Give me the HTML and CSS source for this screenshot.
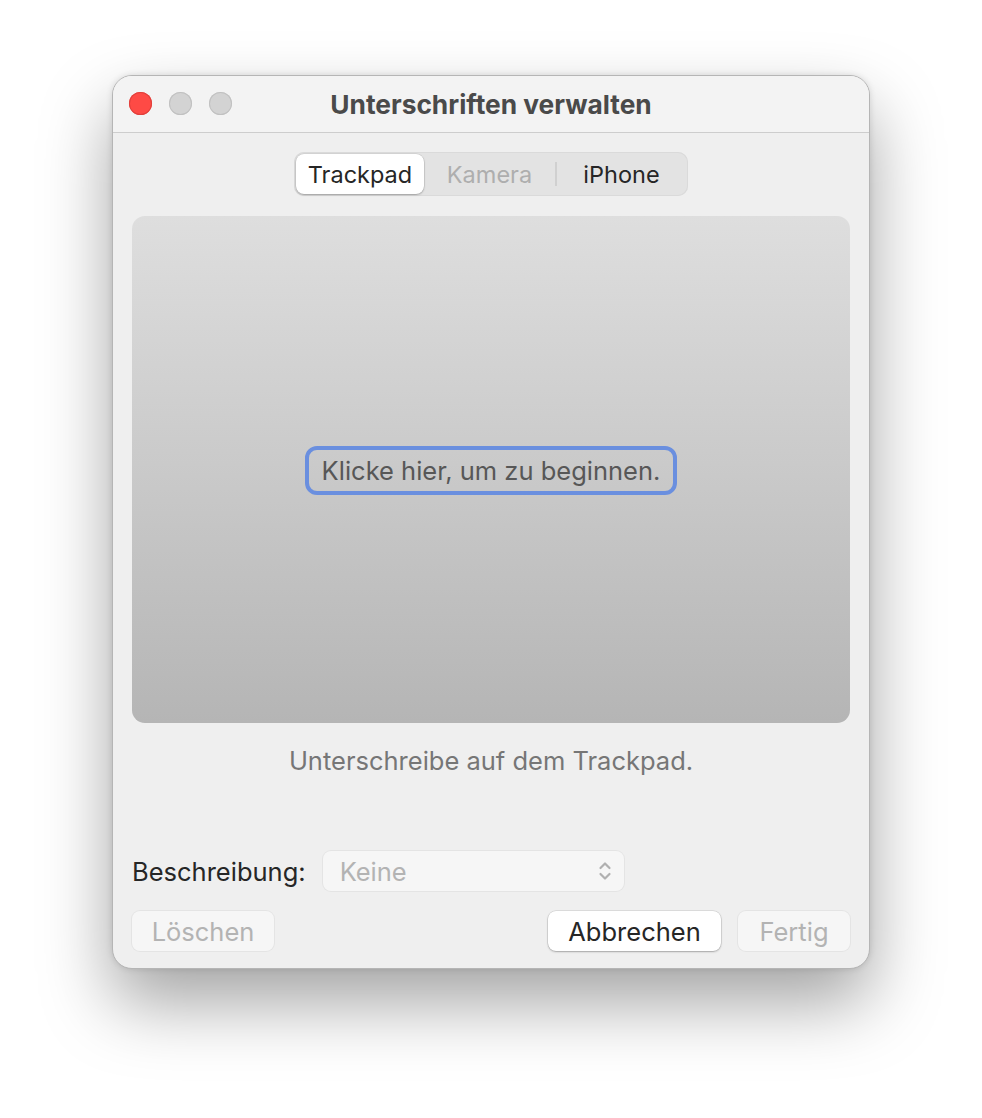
FILE: index.html
```html
<!DOCTYPE html>
<html lang="de">
<head>
<meta charset="utf-8">
<title>Unterschriften verwalten</title>
<link rel="stylesheet" href="styles.css">
</head>
<body>
<div class="stage">
  <div class="window">
    <header class="titlebar">
      <div class="lights">
        <span class="light close"></span>
        <span class="light"></span>
        <span class="light"></span>
      </div>
      <h1 class="title">Unterschriften verwalten</h1>
    </header>
    <main class="content">
      <div class="segmented">
        <span class="seg selected">Trackpad</span>
        <span class="seg disabled">Kamera</span>
        <span class="seg-divider"></span>
        <span class="seg last">iPhone</span>
      </div>
      <div class="pad">
        <div class="start">Klicke hier, um zu beginnen.</div>
      </div>
      <p class="hint">Unterschreibe auf dem Trackpad.</p>
      <div class="form-row">
        <span class="label">Beschreibung:</span>
        <div class="popup">
          <span>Keine</span>
          <svg class="chevrons" width="14" height="24" viewBox="0 0 14 24">
            <path d="M2.5 9 L7 4.5 L11.5 9 M2.5 15 L7 19.5 L11.5 15" fill="none" stroke="#b0b0b0" stroke-width="2.2" stroke-linecap="round" stroke-linejoin="round"/>
          </svg>
        </div>
      </div>
      <div class="buttons">
        <button class="btn disabled delete">Löschen</button>
        <span class="spacer"></span>
        <button class="btn primary">Abbrechen</button>
        <button class="btn disabled done">Fertig</button>
      </div>
    </main>
  </div>
</div>
</body>
</html>
```
FILE: styles.css
```css
html, body {
  margin: 0;
  padding: 0;
  background: #ffffff;
}

body {
  font-family: "Inter", "Liberation Sans", sans-serif;
  color: #262626;
  min-height: 1118px;
}

.stage {
  padding: 75px 0 0 112px;
  height: 1118px;
  box-sizing: border-box;
}

.window {
  width: 758px;
  height: 894px;
  box-sizing: border-box;
  border-radius: 20px;
  background: #efefef;
  border: 1px solid #b5b5b5;
  box-shadow: 0 34px 70px rgba(0, 0, 0, 0.36), 0 0 6px rgba(0, 0, 0, 0.12);
  overflow: hidden;
  display: flex;
  flex-direction: column;
}

.titlebar {
  height: 56px;
  flex: none;
  background: #f3f3f3;
  border-bottom: 1px solid #cdcdcd;
  position: relative;
  display: flex;
  align-items: center;
  justify-content: center;
}

.lights {
  position: absolute;
  left: 16px;
  top: 16px;
  display: flex;
  gap: 17px;
}

.light {
  width: 23px;
  height: 23px;
  border-radius: 50%;
  background: #d3d3d3;
  box-shadow: inset 0 0 0 1px #c1c1c1;
}

.light.close {
  background: #fe4a45;
  box-shadow: inset 0 0 0 1px #e0403c;
}

.title {
  margin: 0;
  font-size: 26.3px;
  font-weight: 700;
  color: #4a4a4a;
}

.content {
  flex: 1;
  display: flex;
  flex-direction: column;
  padding: 19px 19px 0 19px;
}

.segmented {
  align-self: center;
  display: flex;
  align-items: center;
  height: 44px;
  box-sizing: border-box;
  padding: 2px;
  border-radius: 10px;
  background: #e3e3e3;
  box-shadow: inset 0 0 0 1px #dadada;
  font-size: 23.5px;
}

.seg {
  height: 40px;
  display: flex;
  align-items: center;
  justify-content: center;
  color: #262626;
}

.seg.selected {
  width: 128px;
  background: #ffffff;
  border-radius: 8px;
  box-shadow: 0 1px 2px rgba(0, 0, 0, 0.25), 0 0 0 0.5px rgba(0, 0, 0, 0.12);
}

.seg.disabled {
  width: 131px;
  color: #aeaeae;
}

.seg-divider {
  width: 2px;
  height: 24px;
  background: #d0d0d0;
}

.seg.last {
  width: 129px;
}

.pad {
  margin-top: 20px;
  height: 507px;
  border-radius: 13px;
  background: linear-gradient(#dedede, #b5b5b5);
  display: flex;
  align-items: center;
  justify-content: center;
}

.start {
  margin-top: 2px;
  height: 49px;
  box-sizing: border-box;
  padding: 0 13px;
  border: 4px solid #6a8fdf;
  border-radius: 12px;
  font-size: 25.5px;
  color: #575757;
  display: flex;
  align-items: center;
}

.hint {
  margin: 22px 0 0;
  height: 32px;
  line-height: 32px;
  text-align: center;
  font-size: 25.5px;
  color: #767676;
}

.form-row {
  margin-top: 74px;
  display: flex;
  align-items: center;
  gap: 17px;
}

.label {
  font-size: 25.5px;
  color: #262626;
}

.popup {
  width: 301px;
  height: 40px;
  box-sizing: border-box;
  border-radius: 8px;
  background: #f6f6f6;
  box-shadow: 0 0 0 1px #e4e4e4;
  display: flex;
  align-items: center;
  justify-content: space-between;
  padding: 0 12px 0 17px;
  font-size: 25.5px;
  color: #b3b3b3;
}

.buttons {
  margin-top: 20px;
  display: flex;
  align-items: center;
  gap: 17px;
}

.spacer {
  flex: 1;
}

.btn {
  height: 40px;
  border: none;
  border-radius: 8px;
  font-family: inherit;
  font-size: 25.5px;
  padding: 0;
}

.btn.delete {
  width: 142px;
}

.btn.done {
  width: 112px;
}

.btn.disabled {
  background: #f6f6f6;
  color: #b3b3b3;
  box-shadow: 0 0 0 1px #e4e4e4;
}

.btn.primary {
  width: 173px;
  background: #ffffff;
  color: #262626;
  box-shadow: 0 1px 2px rgba(0, 0, 0, 0.25), 0 0 0 0.5px rgba(0, 0, 0, 0.15);
}
```
